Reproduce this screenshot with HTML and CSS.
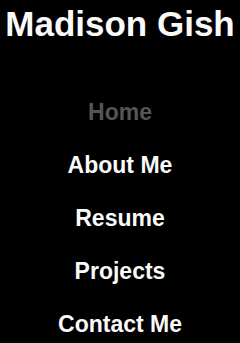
FILE: index.html
```html
<!DOCTYPE html>
<html lang="en">
<head>
    <meta charset="UTF-8">
    <meta name="viewport" content="width=device-width, initial-scale=1.0">
    <title>Madison Gish</title>
    <link rel="stylesheet" href="styles.css">
</head>
<body>

<header>
    <h1>Madison Gish</h1>
</header>

<nav>
    <ul class="nav-list">
        <li><a class="nav-link active" href="#">Home</a></li>
        <li><a class="nav-link" href="#">About Me</a></li>
        <li><a class="nav-link" href="#">Resume</a></li>
        <li><a class="nav-link" href="#">Projects</a></li>
        <li><a class="nav-link" href="#">Contact Me</a></li>
    </ul>
</nav>

</body>
</html>
```

FILE: styles.css
```css
* {
    margin: 0;
    padding: 0;
    box-sizing: border-box;
    font-family: "Liberation Sans", Arial, sans-serif;
}

body {
    background-color: #000;
    color: #fff;
    min-height: 100vh;
    overflow: hidden;
}

header {
    text-align: center;
    padding-top: 4px;
}

h1 {
    font-size: 35px;
    font-weight: bold;
    color: #fafafa;
}

nav {
    margin-top: 42px;
}

.nav-list {
    list-style: none;
    text-align: center;
}

.nav-list li {
    font-size: 23px;
    line-height: 53px;
}

.nav-link {
    color: #fafafa;
    font-weight: bold;
    text-decoration: none;
}

.nav-link.active {
    color: #555;
}
```
